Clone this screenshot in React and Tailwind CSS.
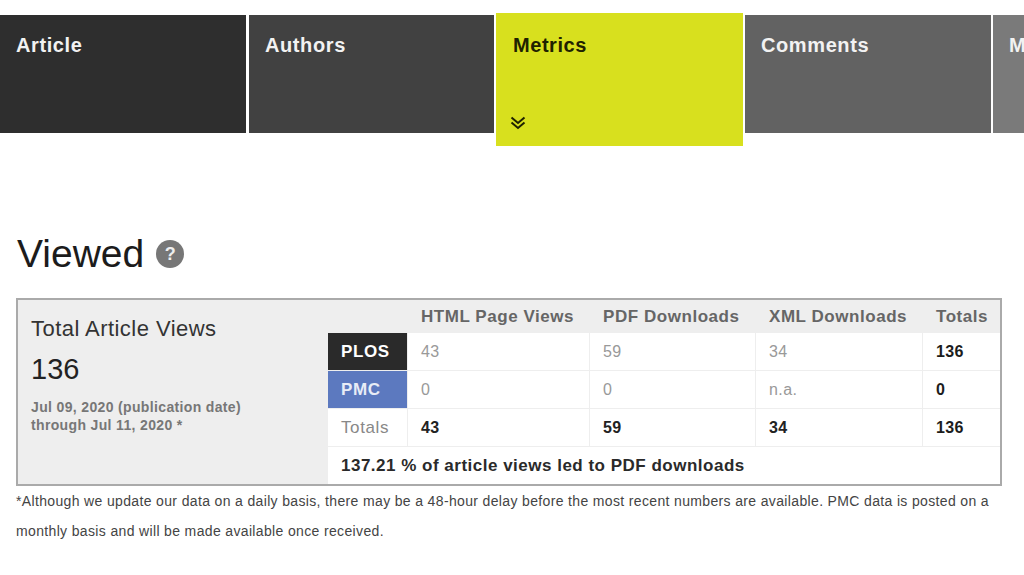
const tabs = [
  { label: 'Article', bg: 'bg-[#2e2e2e]', width: 'w-[246px]' },
  { label: 'Authors', bg: 'bg-[#414141]', width: 'ml-[1px] w-[245px]' },
  { label: 'Metrics', active: true },
  { label: 'Comments', bg: 'bg-[#626262]', width: 'w-[246px]' },
  { label: 'Media Coverage', bg: 'bg-[#7a7a7a]', width: 'w-[246px]' },
];

const rows = [
  { name: 'PLOS', nameClass: 'bg-[#2a2a2a] text-white font-bold', cells: ['43', '59', '34'], total: '136', muted: true },
  { name: 'PMC', nameClass: 'bg-[#5c79bf] text-[#e8ecf6] font-bold', cells: ['0', '0', 'n.a.'], total: '0', muted: true },
  { name: 'Totals', nameClass: 'bg-white text-[#888]', cells: ['43', '59', '34'], total: '136' },
];

function Tab({ tab }) {
  if (tab.active) {
    return (
      <div className="relative z-10 -mt-[2px] flex h-[133px] w-[247px] shrink-0 flex-col justify-between bg-[#d8e01e] pl-[17px] pt-[20px] pb-[16px] text-[#1f2200]">
        <span className="text-[20px] leading-[24px] font-bold tracking-[0.55px]">{tab.label}</span>
        <svg className="-ml-[3px] h-[14px] w-[16px]" viewBox="0 0 16 14" fill="none" stroke="currentColor" strokeWidth="2">
          <path d="M1.5 1.5 8 7l6.5-5.5" />
          <path d="M1.5 6.5 8 12l6.5-5.5" />
        </svg>
      </div>
    );
  }
  return (
    <div className={`h-full shrink-0 pl-[16px] pt-[18px] ${tab.bg} ${tab.width}`}>
      <span className="whitespace-nowrap text-[20px] leading-[24px] font-bold tracking-[0.6px] text-[#f2f2f2]">{tab.label}</span>
    </div>
  );
}

export default function App() {
  return (
    <div className="h-[575px] w-[1024px] overflow-hidden bg-white font-['Liberation_Sans',Arial,sans-serif]">
      {/* Tabs */}
      <nav className="mt-[15px] flex h-[118px] gap-[2px]">
        {tabs.map(tab => (
          <Tab key={tab.label} tab={tab} />
        ))}
      </nav>

      {/* Heading */}
      <div className="mt-[95px] flex items-center gap-[12px] pl-[17px]">
        <h1 className="text-[39px] leading-[52px] text-[#1c1c1c]">Viewed</h1>
        <span className="flex h-[28px] w-[28px] items-center justify-center rounded-full bg-[#777] text-[18px] font-bold text-[#eee]">?</span>
      </div>

      {/* Stats box */}
      <div className="mt-[18px] ml-[16px] flex h-[188px] w-[986px] border-2 border-[#aaa] bg-[#eee]">
        <div className="w-[310px] shrink-0 pl-[13px] pt-[16px]">
          <div className="text-[22px] leading-[26px] tracking-[0.45px] text-[#333]">Total Article Views</div>
          <div className="mt-[10px] text-[29px] leading-[34px] text-[#222]">136</div>
          <div className="mt-[12px] text-[14px] leading-[18px] font-bold tracking-[0.35px] text-[#777]">
            Jul 09, 2020 (publication date)
            <br />
            through Jul 11, 2020 *
          </div>
        </div>

        <div className="flex-1">
          <div className="grid h-[33px] grid-cols-[79px_182px_166px_167px_1fr] items-center text-[17px] font-bold tracking-[0.55px] text-[#666]">
            <span />
            <span className="pl-[14px]">HTML Page Views</span>
            <span className="pl-[14px]">PDF Downloads</span>
            <span className="pl-[14px]">XML Downloads</span>
            <span className="pl-[14px]">Totals</span>
          </div>
          <div className="bg-white">
            {rows.map(row => (
              <div key={row.name} className="grid h-[38px] grid-cols-[79px_182px_166px_167px_1fr] border-b border-[#eee] text-[16px] tracking-[0.4px]">
                <div className={`flex items-center pl-[13px] text-[17px] tracking-[0.6px] ${row.nameClass}`}>{row.name}</div>
                {row.cells.map((cell, i) => (
                  <div
                    key={i}
                    className={`flex items-center border-l border-[#eee] pl-[13px] ${row.muted ? 'text-[#999]' : 'font-bold text-[#222]'}`}
                  >
                    {cell}
                  </div>
                ))}
                <div className="flex items-center border-l border-[#eee] pl-[13px] font-bold text-[#1c1c1c]">{row.total}</div>
              </div>
            ))}
            <div className="flex h-[37px] items-center pl-[13px] text-[17px] font-bold tracking-[0.5px] text-[#2a2a2a]">
              137.21 % of article views led to PDF downloads
            </div>
          </div>
        </div>
      </div>

      {/* Footnote */}
      <p className="ml-[16px] w-[990px] text-[14px] leading-[30px] tracking-[0.35px] text-[#444]">
        *Although we update our data on a daily basis, there may be a 48-hour delay before the most recent numbers are available. PMC data is posted on a monthly basis and will be made available once received.
      </p>
    </div>
  );
}
